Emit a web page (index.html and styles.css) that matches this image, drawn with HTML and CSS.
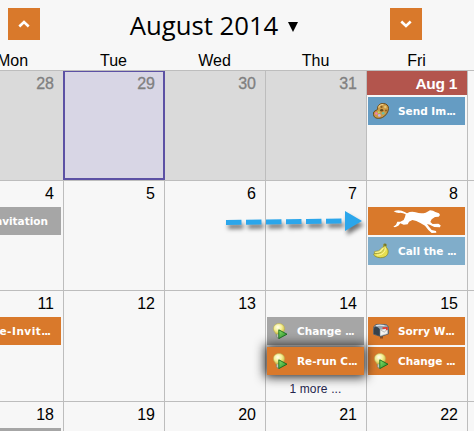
FILE: index.html
```
<!DOCTYPE html>
<html lang="en">
<head>
<meta charset="utf-8">
<title>Calendar</title>
<link rel="stylesheet" href="styles.css">
</head>
<body>
<svg class="defs" width="0" height="0" aria-hidden="true">
  <defs>
    <radialGradient id="glow" cx=".4" cy=".35" r=".7"><stop offset="0" stop-color="#fffff0"/><stop offset=".5" stop-color="#f5ef92"/><stop offset="1" stop-color="#c9b93d"/></radialGradient>
    <linearGradient id="play" x2="1" y2="1"><stop offset="0" stop-color="#8ee36c"/><stop offset="1" stop-color="#1c8a22"/></linearGradient>
    <symbol id="bulb" viewBox="0 0 16 16">
      <path d="M4.400 10.200h4.800v3.200l-1.400 1.900H5.800l-1.400-1.900z" fill="#c3cabf" stroke="#727b68" stroke-width=".6"/>
      <path d="M7 .5C3.600.5 1.400 2.800 1.400 5.700c0 2.200 1.500 3.100 2.600 5.300h6c1.200-2.200 2.600-3.100 2.600-5.300C12.600 2.800 10.300.5 7 .5z" fill="url(#glow)" stroke="#b8ad50" stroke-width=".6"/>
      <path d="M6.800 6.800v8.800l8.200-4.400z" fill="url(#play)" stroke="#176b1d" stroke-width=".9" stroke-linejoin="round"/>
    </symbol>
    <symbol id="palette" viewBox="0 0 16 16">
      <path d="M10.500.5C7 .3 4.500 2.500 4.600 5.200 4.700 7 3.500 7.200 2 7.900.3 8.800 0 11 .8 12.900c1.100 2.700 5.300 3.100 8.600 1.600 3.400-1.500 5.900-5.500 6.100-8.900C15.600 2.600 13.500.7 10.500.5z" fill="#cc9b48" stroke="#6b4815" stroke-width="1"/>
      <path d="M5.700 4.700C6 2.700 8 1.400 10.300 1.500" fill="none" stroke="#f0d08b" stroke-width="1.100"/>
      <ellipse cx="8.700" cy="7.300" rx="1.600" ry="1.200" fill="#694719"/>
      <circle cx="8.500" cy="3.900" r="1.100" fill="#875d20"/><circle cx="12.300" cy="4" r="1.200" fill="#e5c875"/><circle cx="13" cy="7.500" r="1.100" fill="#8e6425"/>
      <circle cx="3.300" cy="10.500" r="1.300" fill="#ee7fb5"/><circle cx="5.800" cy="9.300" r="1" fill="#b9dd67"/><circle cx="6.300" cy="12.400" r="1.400" fill="#c5b3ef"/><circle cx="10.200" cy="10.300" r="1.300" fill="#68bfa8"/>
    </symbol>
    <symbol id="banana" viewBox="0 0 16 16">
      <path d="M10.800 1l2.400.5-.2 2.600c3.100 2.600 2.800 7.500-.6 9.500-3.700 2-9.300 1.200-11.700-1.700l.6-1.500c3.600.3 7.800-1.200 9.200-5.900z" fill="#e6de50" stroke="#8d8a25" stroke-width=".8"/>
      <path d="M10.700 4C8.600 3.600 8 6.800 5.500 7.800 4.300 8.300 2.500 8 1.300 8.700l.2 1.600c4 .9 8.400-1 9.700-4.900" fill="#f6f287" stroke="#9a9632" stroke-width=".7"/>
      <path d="M12.200 4.400c.5 4-2.200 7.800-8.700 7.700" fill="none" stroke="#fff9a5"/>
      <path d="M11.200.8h2v2l-2 .7z" fill="#71752c"/>
    </symbol>
    <symbol id="mailbox" viewBox="0 0 16 16">
      <path d="M7 10h3v5.500H7z" fill="#8c4b1d"/>
      <path d="M.5 5.200C.7 2.900 2.400 1.600 4 1.400l8.500.1c1.900.4 3 2 3 4v5.300l-7.600 2.700L.5 11.200z" fill="#98a6b1" stroke="#4a5865" stroke-width=".8"/>
      <path d="M3 2.800c2-.8 6-.6 8.500-.1" stroke="#dde6ee" stroke-width="1.300" fill="none"/>
      <path d="M1 11V6.200C1 3.800 2 3.300 3.600 3.800 6 4.500 7.200 6 7.200 8.200v5z" fill="#36414b"/>
      <path d="M7.200 6.800l7.200-1.300v5.200l-7.200 2z" fill="#f4f4f1" stroke="#b7b7b7" stroke-width=".5"/>
      <path d="M7.500 7l4 2.200 2.600-3.400" fill="none" stroke="#999" stroke-width=".6"/>
      <path d="M9.500 4.300l5.300-.4v3.200l-1.700.2V5.700l-3.600.2z" fill="#e3382b"/>
    </symbol>
  </defs>
</svg>
<main class="calendar">
  <header class="toolbar">
    <button class="nav" aria-label="Previous month"><svg width="12" height="8" viewBox="0 0 12 8"><path d="M1.300 6.500L6 2l4.700 4.500"/></svg></button>
    <h1 class="title">August 2014 <i class="caret"></i></h1>
    <button class="nav" aria-label="Next month"><svg width="12" height="8" viewBox="0 0 12 8"><path d="M1.300 1.500L6 6l4.700-4.500"/></svg></button>
  </header>
  <div class="weekdays"><span>Mon</span><span>Tue</span><span>Wed</span><span>Thu</span><span>Fri</span><span></span></div>
  <section class="week">
    <div class="day past"><b class="date">28</b></div>
    <div class="day past selected"><b class="date">29</b></div>
    <div class="day past"><b class="date">30</b></div>
    <div class="day past"><b class="date">31</b></div>
    <div class="day"><b class="date today">Aug 1</b><div class="event blue"><svg class="icon"><use href="#palette"/></svg><span>Send Im<i>...</i></span></div></div>
    <div class="day"></div>
  </section>
  <section class="week">
    <div class="day"><b class="date">4</b><div class="event gray tail"><span>Invitation</span></div></div>
    <div class="day"><b class="date">5</b></div>
    <div class="day"><b class="date">6</b></div>
    <div class="day"><b class="date">7</b></div>
    <div class="day"><b class="date">8</b>
      <div class="event orange banner"><svg width="48" height="28" viewBox="24 21 144 84"><path d="M26 34Q38 28 50 32Q60 36 66 40Q78 33 92 37Q108 42 122 38Q129 35 135 31L144 32L151 36L162 40L165 45L161 50L150 51L140 58L136 66L143 72L160 71L167 76L165 82L148 81L134 74L126 72L132 80L140 90L153 93L154 98L140 99L130 90L120 77L106 69L94 63L82 60L72 65L68 73L56 74L46 70L40 77L30 82L25 80L33 74L37 65L46 65L56 60L60 51L62 43Q51 37 42 39Q33 39 26 34Z"/></svg></div>
      <div class="event sky"><svg class="icon"><use href="#banana"/></svg><span>Call the <i>...</i></span></div>
    </div>
    <div class="day"></div>
  </section>
  <section class="week tall">
    <div class="day"><b class="date">11</b><div class="event orange tail wide"><span>Re-Invit<i>...</i></span></div></div>
    <div class="day"><b class="date">12</b></div>
    <div class="day"><b class="date">13</b></div>
    <div class="day"><b class="date">14</b>
      <div class="event gray"><svg class="icon"><use href="#bulb"/></svg><span>Change <i>...</i></span></div>
      <div class="event orange raised"><svg class="icon"><use href="#bulb"/></svg><span>Re-run C<i>...</i></span></div>
      <a class="more">1 more ...</a>
    </div>
    <div class="day"><b class="date">15</b>
      <div class="event orange"><svg class="icon"><use href="#mailbox"/></svg><span>Sorry W<i>...</i></span></div>
      <div class="event orange"><svg class="icon"><use href="#bulb"/></svg><span>Change <i>...</i></span></div>
    </div>
    <div class="day"></div>
  </section>
  <section class="week">
    <div class="day"><b class="date">18</b><div class="event gray tail"></div></div>
    <div class="day"><b class="date">19</b></div>
    <div class="day"><b class="date">20</b></div>
    <div class="day"><b class="date">21</b></div>
    <div class="day"><b class="date">22</b></div>
    <div class="day"></div>
  </section>
  <svg class="arrow" width="150" height="34" viewBox="0 0 150 34"><path class="dash" d="M6 17.500L122 16"/><path class="head" d="M125 6v20l17-10z"/></svg>
</main>
</body>
</html>
```

FILE: styles.css
```
* { box-sizing: border-box; }
body { margin: 0; background: #f7f7f7; color: #000; font-family: "Liberation Sans", Arial, sans-serif; }
.defs { position: absolute; }
.calendar { position: relative; width: 474px; height: 431px; overflow: hidden; }
.toolbar { display: flex; justify-content: space-between; align-items: flex-start; height: 50px; padding: 8px 52px 0 8px; }
.nav { display: grid; place-items: center; width: 32px; height: 32px; padding: 0; border: 0; background: #d9792b; }
.nav path { fill: none; stroke: #fff; stroke-width: 2.6; }
.title { display: flex; align-items: center; margin: 0; padding: 1px 2px 0 0; font: 400 25.700px/34px "Open Sans", sans-serif; white-space: nowrap; }
.caret { margin: 2px 0 0 10px; border: 5.5px solid transparent; border-top: 10px solid #000; border-bottom: 0; }
.weekdays, .week { display: grid; grid-template-columns: repeat(6, 101px); width: 606px; margin-left: -37px; }
.weekdays { height: 20px; padding-top: 1px; font-size: 16px; line-height: 20px; text-align: center; }
.weekdays span { padding-right: 2px; }
.week { height: 110px; border-top: 1px solid #bdbdbd; }
.week.tall { height: 111px; }
.day { display: flex; flex-direction: column; gap: 2px; min-width: 0; border-right: 1px solid #bdbdbd; }
.past { background: #dadada; color: #808080; }
.selected { margin-left: -1px; background: #d8d6e5; border: 2px solid #5c51a4; border-top-width: 1px; }
.selected .date { padding-right: 8px; margin-top: -1px; }
.date { flex: none; height: 24px; padding: 1px 9px 0 0; font-size: 16px; font-weight: 400; line-height: 24px; text-align: right; }
.past .date { -webkit-text-stroke: .3px #808080; }
.today { padding-right: 10px; background: #b3554d; color: #fff; font-size: 15.500px; font-weight: 700; letter-spacing: -.3px; }
.event { display: flex; align-items: center; flex: none; height: 28px; margin: 0 2px 0 1px; padding-left: 5px; color: #fff; font: 700 10.500px/28px "DejaVu Sans", sans-serif; white-space: nowrap; }
.event i { font-style: normal; letter-spacing: -1.100px; }
.icon { flex: none; width: 16px; height: 16px; margin-right: 9px; }
.tail { justify-content: flex-end; padding-right: 13px; }
.wide { letter-spacing: .5px; padding-right: 11px; }
.blue { background: #659cc3; }
.sky { background: #80adca; }
.gray { background: #a6a6a6; }
.orange { background: #d9792b; }
.banner { justify-content: center; padding: 0; }
.banner path { fill: #fff; }
.raised { position: relative; box-shadow: 0 0 11px 2px #222; }
.more { margin-top: 3px; padding-right: 1px; color: #25254d; font-size: 12px; line-height: 18px; letter-spacing: .15px; text-align: center; }
.arrow { position: absolute; left: 220px; top: 205px; filter: drop-shadow(2px 4px 2px #0008); }
.dash { fill: none; stroke: #2ba6eb; stroke-width: 5; stroke-dasharray: 15.500 4.500; }
.head { fill: #2ba6eb; }
```
